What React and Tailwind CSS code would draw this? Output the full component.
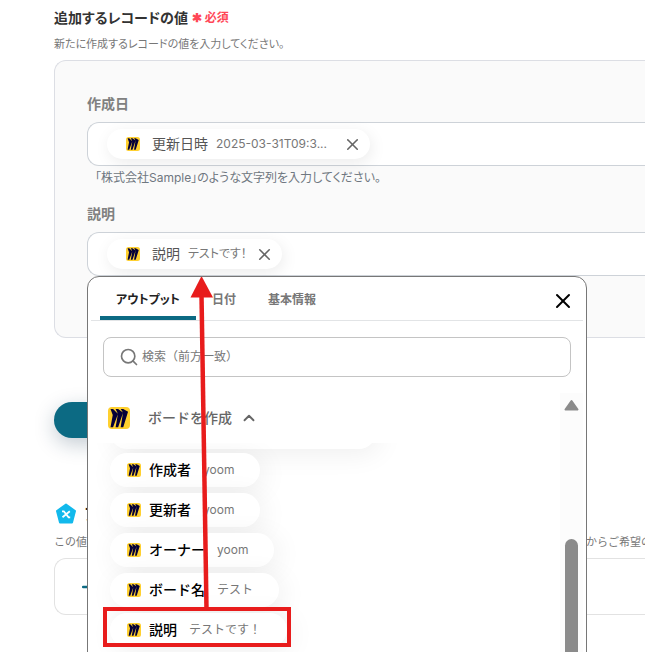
import React from 'react'
import { X, Search, ChevronUp, Plus } from 'lucide-react'

const OUTPUTS = [
  { label: '作成者', value: 'yoom' },
  { label: '更新者', value: 'yoom' },
  { label: 'オーナー', value: 'yoom' },
  { label: 'ボード名', value: 'テスト' },
  { label: '説明', value: 'テストです！' },
]

const TABS = ['アウトプット', '日付', '基本情報']

// Miro logo
function MiroLogo({ className = '' }) {
  return (
    <svg viewBox="0 0 28 28" className={`shrink-0 ${className}`} aria-hidden="true">
      <rect width="28" height="28" rx="5" fill="#ffd02f" />
      <path
        transform="translate(3.2 2.4) scale(0.93 0.97)"
        fill="#050038"
        d="M17.392 0H13.9L17 4.808 10.444 0H6.949l3.102 6.3L3.494 0H0l3.05 8.131L0 24h3.494L10.05 6.985 6.949 24h3.494L17 5.494 13.899 24h3.493L24 3.672 17.392 0z"
      />
    </svg>
  )
}

// Chip shown inside a field
function FieldChip({ label, value, width = '' }) {
  return (
    <div className="flex h-[30px] shrink-0 items-center rounded-full bg-white pl-[19px] pr-2 shadow-[2px_4px_16px_rgba(0,0,0,0.08)]">
      <MiroLogo className="size-3.5" />
      <span className="ml-3 text-sm text-[#555]">{label}</span>
      <span className={`ml-2 text-[12px] text-[#777] ${width}`}>{value}</span>
      <button type="button" aria-label={`${label}を削除`} className="ml-2 text-[#666]">
        <X size={19} strokeWidth={2} />
      </button>
    </div>
  )
}

// Label + chip input
function Field({ id, label, chip, help, children }) {
  return (
    <div className="relative">
      <label htmlFor={id} className="block text-sm leading-5 font-bold text-[#808080]">{label}</label>
      <div className="mt-2 flex h-11 items-center rounded-l-xl border-y border-l border-[#cdd2d8] bg-white pl-[19px]">
        <FieldChip {...chip} />
        <input id={id} type="text" className="min-w-0 flex-1 outline-none" />
      </div>
      {help && <p className="pt-0.5 pl-2 text-[12px] leading-5 text-[#6f7780]">{help}</p>}
      {children}
    </div>
  )
}

// Row in the output list
function OutputChip({ label, value }) {
  return (
    <button
      type="button"
      className="flex h-[34px] shrink-0 items-center rounded-full bg-white pl-[17px] pr-[26px] shadow-[4px_4px_28px_rgba(0,0,0,0.07)]"
    >
      <MiroLogo className="size-3.5" />
      <span className="ml-2 text-sm font-medium text-black">{label}</span>
      <span className="ml-3 text-[12px] text-[#777]">{value}</span>
    </button>
  )
}

// Output picker
function Picker() {
  return (
    <div className="absolute top-full left-0 z-10 w-[500px] rounded-t-xl border border-[#777] bg-white px-[3px]">
      <div className="flex h-11 items-stretch border-b border-[#e2e4e6] pl-[9px] pr-2 [font-feature-settings:'palt']">
        {TABS.map((tab, i) => (
          <button
            key={tab}
            type="button"
            className={
              i === 0
                ? 'rounded-t-sm px-4 pt-0.5 text-[12px] font-bold text-[#222] shadow-[inset_0_-4px_0_#0c6a83]'
                : 'px-4 pt-0.5 text-[12px] font-bold text-[#777]'
            }
          >
            {tab}
          </button>
        ))}
        <button type="button" aria-label="閉じる" className="ml-auto self-center pt-1 text-black">
          <X size={24} strokeWidth={2} />
        </button>
      </div>

      <label className="mx-3 mt-4 flex h-10 items-center gap-[3px] rounded-lg border border-[#c4c4c4] pl-[15px]">
        <Search size={20} className="shrink-0 text-[#777]" />
        <input
          type="text"
          aria-label="検索"
          placeholder="検索（前方一致）"
          className="min-w-0 flex-1 text-[12px] outline-none placeholder:text-[#777]"
        />
      </label>

      <div className="mt-4 flex h-[320px]">
        <div className="min-w-0 flex-1">
          <button type="button" className="flex h-[50px] w-full items-center pl-[17px] text-[#666]">
            <MiroLogo className="size-[22px]" />
            <span className="ml-[18px] text-sm font-medium">ボードを作成</span>
            <ChevronUp size={18} strokeWidth={2.5} className="ml-2" />
          </button>
          <div className="flex h-[270px] flex-col items-start gap-1.5 overflow-hidden pl-[19px]">
            <div className="-mt-7 -mb-0.5 h-[34px] w-[266px] shrink-0 rounded-full bg-white shadow-[4px_4px_28px_rgba(0,0,0,0.07)]" />
            {OUTPUTS.map(o => <OutputChip key={o.label} {...o} />)}
          </div>
        </div>
        <div className="flex w-[23px] flex-col items-center bg-[#fcfcfc] pt-1.5">
          <svg viewBox="0 0 15 12" className="h-3 w-[15px] shrink-0" aria-hidden="true">
            <path d="M7.5 2 13.500 10.500h-12z" fill="#8b8b8b" stroke="#8b8b8b" strokeWidth="2" strokeLinejoin="round" />
          </svg>
          <div className="mt-32 w-[13px] flex-1 rounded-full bg-[#8b8b8b]" />
        </div>
      </div>

      {/* red arrow from the picked row up to the field */}
      <svg viewBox="0 0 188 372" className="pointer-events-none absolute top-0 left-[15px] h-[372px] w-[188px]" aria-hidden="true">
        <rect x="2" y="332" width="184" height="36" fill="none" stroke="#e81c1c" strokeWidth="4" />
        <path d="M98.500 18 103.500 332" stroke="#e81c1c" strokeWidth="4.500" />
        <path d="M98.500-1 110 20.500H87.500z" fill="#e81c1c" />
      </svg>
    </div>
  )
}

export default function App() {
  return (
    <main className="h-screen overflow-hidden bg-white pl-[54px] font-['Inter','Noto_Sans_CJK_JP',sans-serif]">
      <header className="pt-2 [font-feature-settings:'palt']">
        <h1 className="flex items-center gap-1 text-sm leading-5 font-bold text-[#333]">
          追加するレコードの値
          <span className="text-[12px] text-[#ff4757]">✱ 必須</span>
        </h1>
        <p className="mt-1.5 text-[11px] leading-5 text-[#777]">新たに作成するレコードの値を入力してください。</p>
      </header>

      <section className="mt-1.5 flex h-[278px] flex-col gap-4 rounded-l-xl border-y border-l border-[#dcdee4] bg-[#fafafa] pt-[33px] pl-8 [font-feature-settings:'palt']">
        <Field
          id="created"
          label="作成日"
          chip={{ label: '更新日時', value: '2025-03-31T09:3...', width: 'w-[119px]' }}
          help="「株式会社Sample」のような文字列を入力してください。"
        />
        <Field id="description" label="説明" chip={{ label: '説明', value: 'テストです！' }}>
          <div className="[font-feature-settings:normal]">
            <Picker />
          </div>
        </Field>
      </section>

      <button
        type="button"
        aria-label="テスト"
        className="mt-16 block h-9 w-32 rounded-full bg-[#0c6a83] shadow-[0_6px_20px_rgba(20,50,80,0.25)]"
      />

      <section className="mt-16">
        <h2 className="flex h-6 items-center gap-1.5 text-base font-bold text-[#222]">
          <svg viewBox="0 0 24 24" className="size-6 shrink-0" aria-hidden="true">
            <path d="M12 2.500 21 9 18 20.500H6L3 9z" fill="#12b9ec" stroke="#12b9ec" strokeWidth="2" strokeLinejoin="round" />
            <path d="M8 9.300h1.800l4.800 6H16.200M15.800 9.300 8.500 15.300" fill="none" stroke="#fff" strokeWidth="1.800" />
          </svg>
          アウトプット
        </h2>
        <p className="mt-1.5 flex text-[11px] leading-5 whitespace-nowrap text-[#777]">
          <span className="w-[532px] shrink-0">この値</span>
          <span>からご希望の値</span>
        </p>
        <div className="mt-1.5 flex h-[57px] items-center rounded-l-xl border-y border-l border-[#e2e2e2] pl-6 text-[#0c6a83]">
          <button type="button" className="flex items-center gap-1 text-sm">
            <Plus size={20} strokeWidth={3} />
            追加
          </button>
        </div>
      </section>
    </main>
  )
}
